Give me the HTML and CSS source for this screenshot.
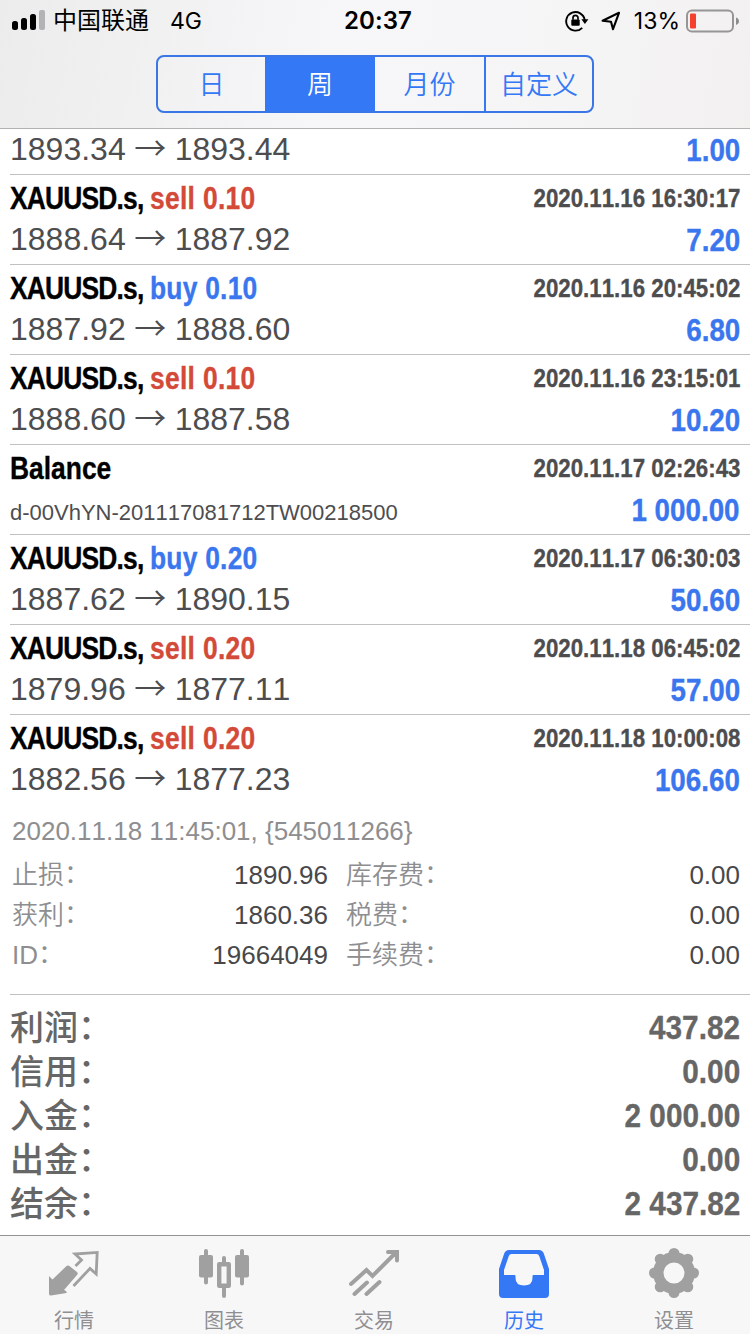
FILE: index.html
```html
<!DOCTYPE html>
<html lang="zh-CN">
<head>
<meta charset="utf-8">
<title>历史</title>
<link rel="stylesheet" href="styles.css">
</head>
<body>
<header class="top">
  <div class="status">
    <div class="status-left">
      <svg class="signal" width="34" height="22" viewBox="0 0 34 22"><rect x="0" y="11" width="6" height="9" rx="2.5"/><rect x="9" y="8" width="6" height="12" rx="2.5"/><rect x="18" y="4" width="6" height="16" rx="2.5"/><rect x="27" y="0" width="6" height="20" rx="2" fill="#b3b3b5"/></svg>
      <span class="carrier">中国联通</span>
      <span class="network">4G</span>
    </div>
    <time class="clock">20:37</time>
    <div class="status-right">
      <svg class="lock" width="24" height="22" viewBox="0 0 24 22"><path d="M17.200 17.800A9.300 9.300 0 1 1 19.700 10" fill="none" stroke="#000" stroke-width="1.900"/><path d="M16.400 9.300h7l-3.500 4.800z"/><rect x="6.300" y="9.400" width="8.400" height="6.400" rx="1"/><path d="M8 9.800V7.800a2.500 2.500 0 0 1 5 0v2" fill="none" stroke="#000" stroke-width="1.700"/></svg>
      <svg class="locate" width="20" height="20" viewBox="0 0 20 20"><path d="M1.600 9.800 18 1.800 12 18.200 10 10.800z" fill="none" stroke="#000" stroke-width="2.100" stroke-linejoin="round"/></svg>
      <span class="percent">13%</span>
      <svg class="battery" width="54" height="24" viewBox="0 0 54 24"><rect x="1" y="1.500" width="46" height="21" rx="5" fill="none" stroke="#969696" stroke-width="2"/><rect x="4" y="4.500" width="6" height="15" rx="1" fill="#f5402d"/><path d="M50 8.500q3 1 3 3.700t-3 3.700z" fill="#8d8d8d"/></svg>
    </div>
  </div>
  <nav class="segments">
    <span class="segment">日</span><span class="segment selected">周</span><span class="segment">月份</span><span class="segment">自定义</span>
  </nav>
</header>
<main class="content">
  <section class="deals">
    <article class="deal partial">
      <div class="line"><span class="prices">1893.34<i class="to">→</i>1893.44</span><b class="profit">1.00</b></div>
    </article>
    <article class="deal">
      <div class="line head"><b class="title"><span class="symbol">XAUUSD.s, </span><span class="sell">sell 0.10</span></b><b class="date">2020.11.16 16:30:17</b></div>
      <div class="line"><span class="prices">1888.64<i class="to">→</i>1887.92</span><b class="profit">7.20</b></div>
    </article>
    <article class="deal">
      <div class="line head"><b class="title"><span class="symbol">XAUUSD.s, </span><span class="buy">buy 0.10</span></b><b class="date">2020.11.16 20:45:02</b></div>
      <div class="line"><span class="prices">1887.92<i class="to">→</i>1888.60</span><b class="profit">6.80</b></div>
    </article>
    <article class="deal">
      <div class="line head"><b class="title"><span class="symbol">XAUUSD.s, </span><span class="sell">sell 0.10</span></b><b class="date">2020.11.16 23:15:01</b></div>
      <div class="line"><span class="prices">1888.60<i class="to">→</i>1887.58</span><b class="profit">10.20</b></div>
    </article>
    <article class="deal">
      <div class="line head"><b class="title balance">Balance</b><b class="date">2020.11.17 02:26:43</b></div>
      <div class="line"><span class="note">d-00VhYN-201117081712TW00218500</span><b class="profit">1 000.00</b></div>
    </article>
    <article class="deal">
      <div class="line head"><b class="title"><span class="symbol">XAUUSD.s, </span><span class="buy">buy 0.20</span></b><b class="date">2020.11.17 06:30:03</b></div>
      <div class="line"><span class="prices">1887.62<i class="to">→</i>1890.15</span><b class="profit">50.60</b></div>
    </article>
    <article class="deal">
      <div class="line head"><b class="title"><span class="symbol">XAUUSD.s, </span><span class="sell">sell 0.20</span></b><b class="date">2020.11.18 06:45:02</b></div>
      <div class="line"><span class="prices">1879.96<i class="to">→</i>1877.11</span><b class="profit">57.00</b></div>
    </article>
    <article class="deal open">
      <div class="line head"><b class="title"><span class="symbol">XAUUSD.s, </span><span class="sell">sell 0.20</span></b><b class="date">2020.11.18 10:00:08</b></div>
      <div class="line"><span class="prices">1882.56<i class="to">→</i>1877.23</span><b class="profit">106.60</b></div>
      <div class="details">
        <p class="closed">2020.11.18 11:45:01, {545011266}</p>
        <span>止损<i class="colon">：</i></span><span class="value">1890.96</span><span>库存费<i class="colon">：</i></span><span class="value">0.00</span>
        <span>获利<i class="colon">：</i></span><span class="value">1860.36</span><span>税费<i class="colon">：</i></span><span class="value">0.00</span>
        <span>ID<i class="colon">：</i></span><span class="value">19664049</span><span>手续费<i class="colon">：</i></span><span class="value">0.00</span>
      </div>
    </article>
  </section>
  <section class="summary">
    <div class="total"><span class="name">利润<i class="colon">：</i></span><b class="sum">437.82</b></div>
    <div class="total"><span class="name">信用<i class="colon">：</i></span><b class="sum">0.00</b></div>
    <div class="total"><span class="name">入金<i class="colon">：</i></span><b class="sum">2 000.00</b></div>
    <div class="total"><span class="name">出金<i class="colon">：</i></span><b class="sum">0.00</b></div>
    <div class="total"><span class="name">结余<i class="colon">：</i></span><b class="sum">2 437.82</b></div>
  </section>
</main>
<footer class="tabs">
  <a class="tab"><svg width="50" height="52" viewBox="0 0 50 52"><path d="M0 28 3.500 31.500 17 18.500q2-2 4 0l7 5.500q1.500 1.500 0 3L15 42l2 1q1 1 .5 2L2 47.500Q0 47.500 0 46z"/><path d="M26.500 18 32.500 12 26 6 48.200 4.400 47.200 26 41 20.500 24.500 38" fill="none" stroke="currentColor" stroke-width="2.800"/></svg>行情</a>
  <a class="tab"><svg width="50" height="52" viewBox="0 0 50 52"><rect y="7" width="14" height="22.500" rx="2"/><rect x="36" y="7" width="14" height="22.500" rx="2"/><path d="M7 3v31.500M43 3v32.500M25 10v6M25 39v9" fill="none" stroke="currentColor" stroke-width="4" stroke-linecap="round"/><rect x="20.200" y="16.200" width="9.600" height="21.600" fill="none" stroke="currentColor" stroke-width="4.400" stroke-linejoin="round"/></svg>图表</a>
  <a class="tab"><svg width="50" height="52" viewBox="0 0 50 52"><path d="M2 36 17.500 22 23.500 28 47 4.500M39 4H48v8.500M5.500 46 18 34.500M17.500 46 30.500 34" fill="none" stroke="currentColor" stroke-width="4" stroke-linecap="round"/></svg>交易</a>
  <a class="tab active"><svg width="50" height="52" viewBox="0 0 50 52"><path fill-rule="evenodd" d="M10 2h30q3.500 0 4.800 3.500L50 21v25q0 4-4 4H4q-4 0-4-4V21L5.200 5.500Q6.500 2 10 2zM12.500 6Q10.500 6 9.800 8L5 22v5h10.500q1 0 1 1v2q0 7.500 8.500 7.500t8.500-7.500v-2q0-1 1-1H45v-5L40.200 8q-.7-2-2.700-2z"/></svg>历史</a>
  <a class="tab"><svg width="50" height="52" viewBox="0 0 50 52"><circle cx="25" cy="25" r="15.700" fill="none" stroke="currentColor" stroke-width="10.400"/><g fill="none" stroke="currentColor" stroke-width="11" stroke-linecap="round"><path d="M25 5.500v3M25 41.500v3M5.500 25h3M41.500 25h3"/><path transform="rotate(45 25 25)" d="M25 5.500v3M25 41.500v3M5.500 25h3M41.500 25h3"/></g></svg>设置</a>
</footer>
</body>
</html>
```
FILE: styles.css
```css
* { box-sizing: border-box; }
body {
  margin: 0;
  width: 750px;
  height: 1334px;
  display: flex;
  flex-direction: column;
  overflow: hidden;
  background: #fff;
  color: #4d4d4f;
  font-family: "Liberation Sans", "Noto Sans CJK SC", sans-serif;
  font-kerning: none;
}
.top {
  height: 129px;
  flex: none;
  border-bottom: 1px solid #b2b2b2;
  background: linear-gradient(100deg, #ececed 0%, #f1f1f2 22%, #f7f6f8 45%, #f5f5f6 75%, #f3f0f0 100%);
}
.status {
  height: 41px;
  display: grid;
  grid-template-columns: 1fr auto 1fr;
  align-items: center;
  padding: 0 10px 0 12px;
  color: #000;
  font-family: Inter, "Noto Sans CJK SC", sans-serif;
  font-size: 24px;
}
.status-left, .status-right { display: flex; align-items: center; }
.status-right { justify-content: flex-end; }
.carrier { margin-left: 7px; height: 31px; line-height: 31px; }
.network { margin-left: 21px; font-size: 23px; }
.clock { font-weight: 600; font-size: 24px; letter-spacing: 0.1px; transform: translateX(2px); }
.locate { margin-left: 12px; }
.percent { margin-left: 13px; font-size: 23px; }
.battery { margin-left: 6px; }
.segments {
  display: grid;
  grid-template-columns: 107px 110px 109px 1fr;
  width: 438px;
  height: 58px;
  margin: 14px 0 0 156px;
  border: 2px solid #3a76e6;
  border-radius: 8px;
  overflow: hidden;
  color: #3478f6;
  font-size: 26px;
  font-weight: 350;
  line-height: 56px;
  text-align: center;
}
.segment:last-child { border-left: 2px solid #3478f6; }
.selected { background: #3478f6; color: #fff; }
.content { flex: 1; }
.deals { padding-left: 10px; }
.deal { height: 90px; border-bottom: 1px solid #c1c1c3; }
.partial { height: 46px; padding-top: 2px; }
.open { height: 280px; }
.line { display: flex; justify-content: space-between; height: 43px; padding-right: 10px; white-space: pre; }
.head { height: 46px; line-height: 46px; }
.title, .date, .profit, .sum { -webkit-text-stroke: 0.35px currentColor; }
.title { color: #000; font-size: 32px; transform: scaleX(.825); transform-origin: left; }
.symbol { letter-spacing: -1px; }
.sell { color: #d34a39; letter-spacing: 0.4px; }
.buy { color: #3a76ee; letter-spacing: 0.3px; }
.date { font-size: 26px; transform: scaleX(.857); transform-origin: right; }
.prices { font-size: 32px; line-height: 36px; height: 36px; margin-top: -3px; }
.to {
  display: inline-block;
  width: 49px;
  text-align: center;
  font: 350 32px/36px "Noto Sans CJK SC", sans-serif;
}
.profit { color: #3a76ee; font-size: 32px; line-height: 38px; transform: scaleX(.868); transform-origin: right; }
.note { font-size: 22px; line-height: 43px; }
.details {
  display: grid;
  grid-template-columns: 110px 206px 130px 1fr;
  padding: 4px 10px 0 2px;
  color: #8e8e90;
  font-size: 26px;
  line-height: 40px;
  font-weight: 350;
}
.details > span:nth-of-type(4n+3) { padding-left: 18px; }
.details > span { height: 40px; white-space: nowrap; }
.closed { grid-column: 1 / -1; margin: 0; height: 47px; line-height: 46px; }
.details .value { color: #48484a; font-weight: 400; text-align: right; }
.colon { font-style: normal; line-height: 0; vertical-align: 0.03em; }
.summary { padding: 10px 10px 0; color: #666; font-size: 34px; font-weight: 500; }
.total { display: flex; justify-content: space-between; height: 44px; line-height: 44px; }
.name { line-height: 46px; }
.sum { transform: scaleX(.875); transform-origin: right; }
.tabs {
  height: 99px;
  flex: none;
  display: grid;
  grid-template-columns: repeat(5, 150px);
  padding-top: 12px;
  margin-left: -1px;
  width: 752px;
  border-top: 1px solid #929294;
  background: #f7f7f8;
}
.tab { display: flex; flex-direction: column; align-items: center; color: #8f8f92; font-size: 20px; line-height: 30px; gap: 6px; }
.tab svg { fill: currentColor; color: #a0a0a0; }
.active, .active svg { color: #3478f6; }
```
